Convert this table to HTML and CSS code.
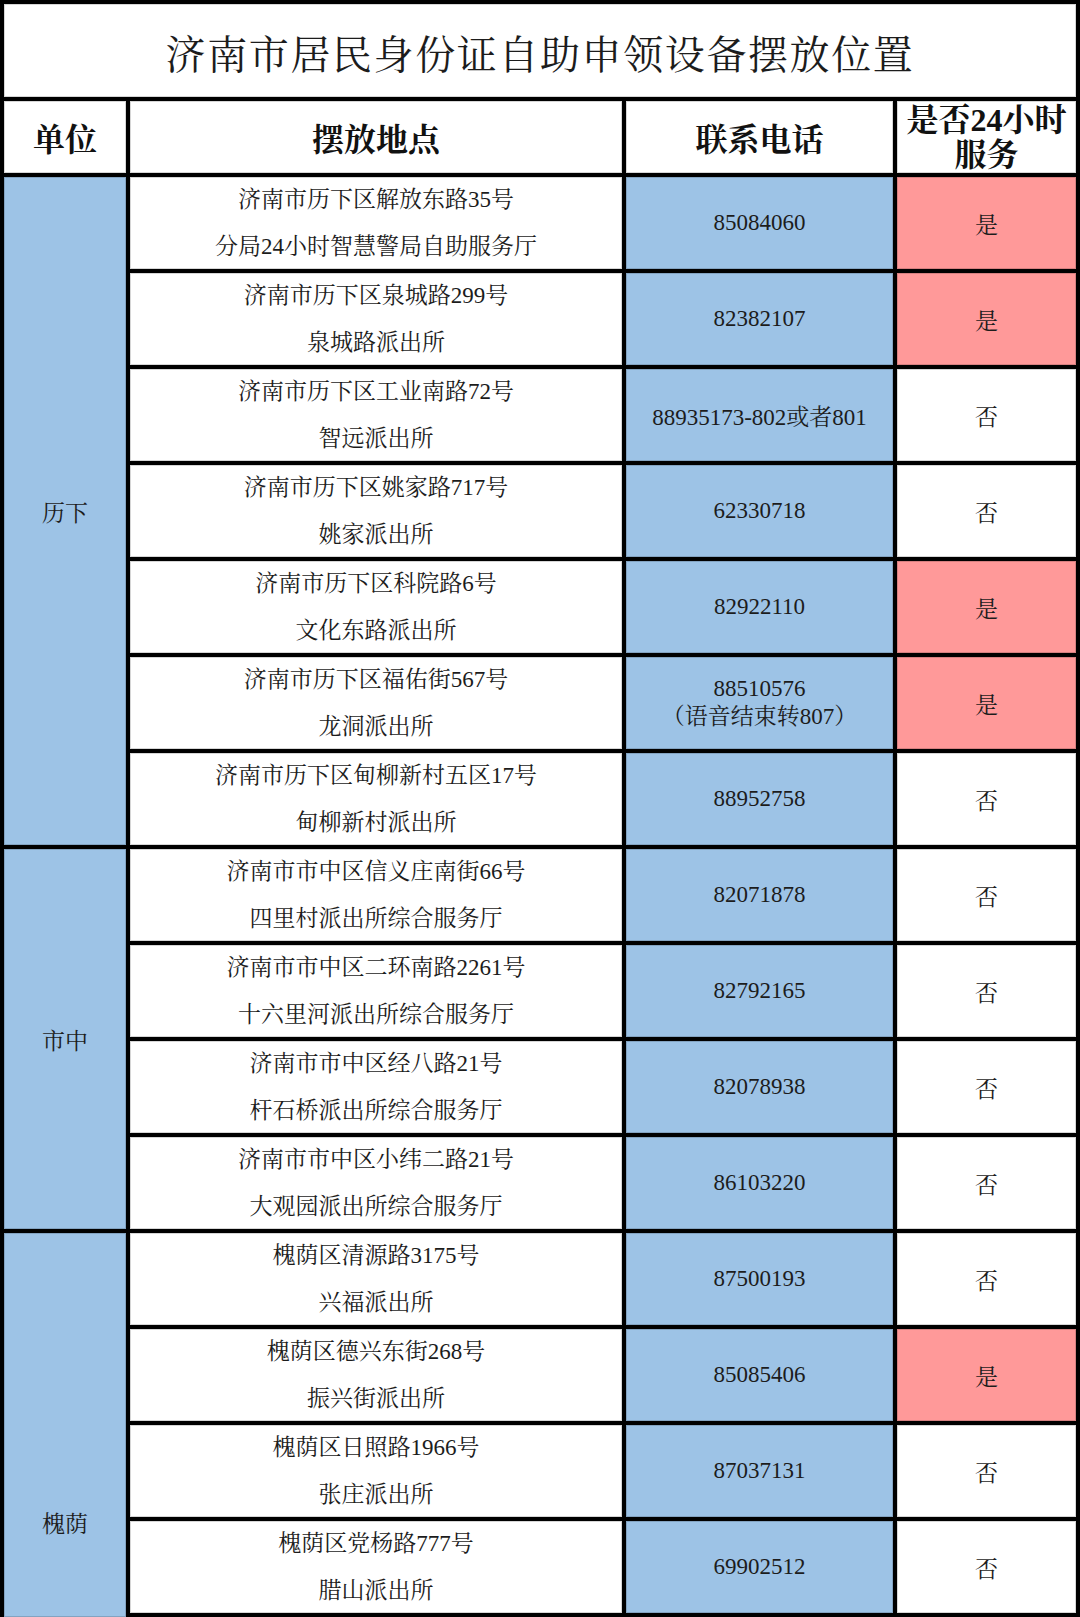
FILE: index.html
```html
<!DOCTYPE html>
<html lang="zh-CN">
<head>
<meta charset="utf-8">
<title>济南市居民身份证自助申领设备摆放位置</title>
<link rel="stylesheet" href="styles.css">
</head>
<body>
<div class="sheet">
  <div class="title">济南市居民身份证自助申领设备摆放位置</div>

  <div class="hd">单位</div>
  <div class="hd">摆放地点</div>
  <div class="hd">联系电话</div>
  <div class="hd hd-wrap">是否24小时服务</div>

  <div class="unit unit-lixia">历下</div>
  <div class="unit unit-shizhong">市中</div>
  <div class="unit unit-huaiyin">槐荫</div>

  <div class="addr">济南市历下区解放东路35号<br>分局24小时智慧警局自助服务厅</div>
  <div class="tel">85084060</div>
  <div class="yes">是</div>

  <div class="addr">济南市历下区泉城路299号<br>泉城路派出所</div>
  <div class="tel">82382107</div>
  <div class="yes">是</div>

  <div class="addr">济南市历下区工业南路72号<br>智远派出所</div>
  <div class="tel">88935173-802或者801</div>
  <div class="no">否</div>

  <div class="addr">济南市历下区姚家路717号<br>姚家派出所</div>
  <div class="tel">62330718</div>
  <div class="no">否</div>

  <div class="addr">济南市历下区科院路6号<br>文化东路派出所</div>
  <div class="tel">82922110</div>
  <div class="yes">是</div>

  <div class="addr">济南市历下区福佑街567号<br>龙洞派出所</div>
  <div class="tel tel-two">88510576<br>（语音结束转807）</div>
  <div class="yes">是</div>

  <div class="addr">济南市历下区甸柳新村五区17号<br>甸柳新村派出所</div>
  <div class="tel">88952758</div>
  <div class="no">否</div>

  <div class="addr">济南市市中区信义庄南街66号<br>四里村派出所综合服务厅</div>
  <div class="tel">82071878</div>
  <div class="no">否</div>

  <div class="addr">济南市市中区二环南路2261号<br>十六里河派出所综合服务厅</div>
  <div class="tel">82792165</div>
  <div class="no">否</div>

  <div class="addr">济南市市中区经八路21号<br>杆石桥派出所综合服务厅</div>
  <div class="tel">82078938</div>
  <div class="no">否</div>

  <div class="addr">济南市市中区小纬二路21号<br>大观园派出所综合服务厅</div>
  <div class="tel">86103220</div>
  <div class="no">否</div>

  <div class="addr">槐荫区清源路3175号<br>兴福派出所</div>
  <div class="tel">87500193</div>
  <div class="no">否</div>

  <div class="addr">槐荫区德兴东街268号<br>振兴街派出所</div>
  <div class="tel">85085406</div>
  <div class="yes">是</div>

  <div class="addr">槐荫区日照路1966号<br>张庄派出所</div>
  <div class="tel">87037131</div>
  <div class="no">否</div>

  <div class="addr">槐荫区党杨路777号<br>腊山派出所</div>
  <div class="tel">69902512</div>
  <div class="no">否</div>
</div>
</body>
</html>
```

FILE: styles.css
```css
html, body {
  margin: 0;
  padding: 0;
  background: #ffffff;
}

body {
  width: 1080px;
  height: 1617px;
  overflow: hidden;
  font-family: "Liberation Serif", "Noto Serif CJK SC", "Noto Sans CJK SC", serif;
  color: #1c1c1c;
}

.sheet {
  box-sizing: border-box;
  width: 1080px;
  height: 1617px;
  padding: 4px;
  background: #000000;
  display: grid;
  grid-template-columns: 122px 492px 267px 179px;
  grid-template-rows: 93px 72px repeat(15, 92px);
  gap: 4px;
}

.sheet > div {
  display: flex;
  align-items: center;
  justify-content: center;
  text-align: center;
  background: #ffffff;
  box-shadow: inset 0 0 0 1px rgba(0, 0, 0, 0.16);
  overflow: hidden;
}

.title {
  grid-column: 1 / -1;
  font-size: 40px;
  letter-spacing: 1.6px;
  padding-top: 2px;
}

.hd {
  font-size: 32px;
  font-weight: bold;
  color: #111111;
}

.hd-wrap {
  line-height: 35px;
  padding-top: 1px;
  box-sizing: border-box;
}

.unit {
  grid-column: 1;
  font-size: 23px;
  background: #9dc3e6 !important;
}

.unit-lixia {
  grid-row: 3 / span 7;
}

.unit-shizhong {
  grid-row: 10 / span 4;
}

.unit-huaiyin {
  grid-row: 14 / span 4;
  margin-bottom: -4px;
  padding-top: 194px;
  box-sizing: border-box;
}

.addr {
  font-size: 23px;
  line-height: 47px;
  white-space: nowrap;
}

.tel {
  font-size: 23px;
  background: #9dc3e6 !important;
  white-space: nowrap;
}

.tel-two {
  line-height: 28px;
}

.yes {
  font-size: 23px;
  background: #ff9999 !important;
}

.no {
  font-size: 23px;
}
```
